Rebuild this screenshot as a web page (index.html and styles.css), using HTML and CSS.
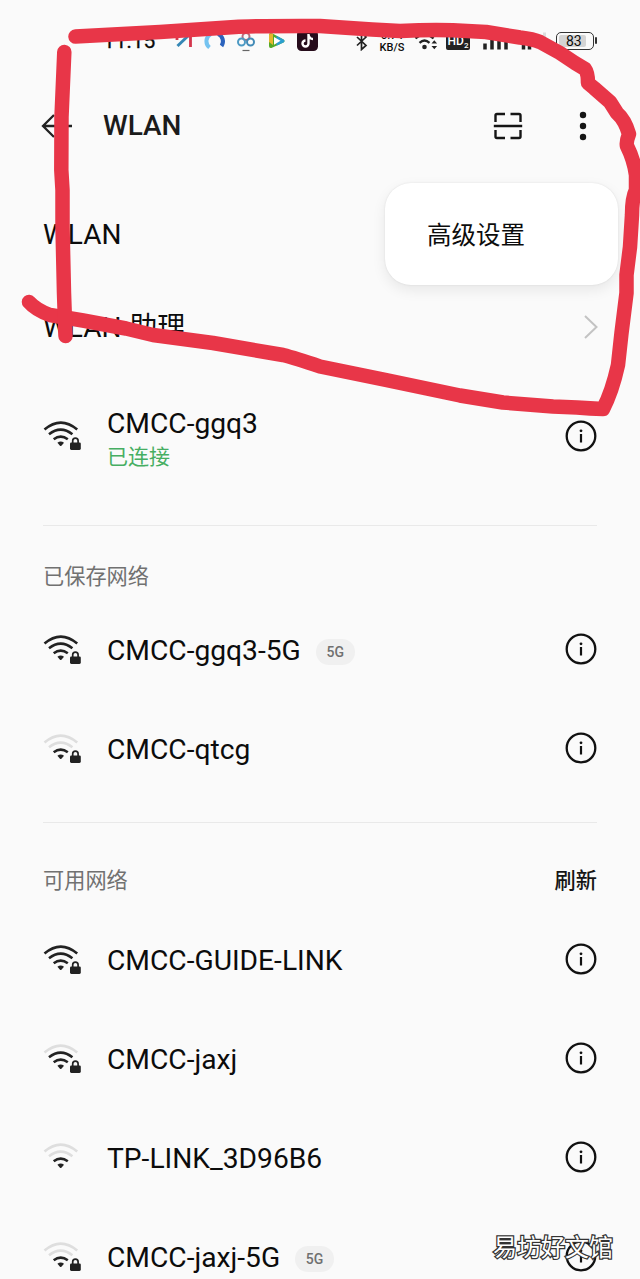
FILE: index.html
```html
<!DOCTYPE html>
<html lang="zh-CN">
<head>
<meta charset="utf-8">
<title>WLAN</title>
<link rel="stylesheet" href="styles.css">
</head>
<body>
<svg class="defs" width="0" height="0" aria-hidden="true">
  <defs>
    <symbol id="arc-outer" viewBox="0 0 40 32"><path d="M1.500 9.500Q17.800-4.300 34.200 9.500"/></symbol>
    <symbol id="arc-mid" viewBox="0 0 40 32"><path d="M6 14.300Q17.700 5 29.400 14.300"/></symbol>
    <symbol id="arc-inner" viewBox="0 0 40 32"><path d="M10.700 19.200Q17.700 14 24.800 19.200"/></symbol>
    <symbol id="wifi-dot" viewBox="0 0 40 32"><path d="M14.400 22.800Q17.700 20 21 22.800L18.400 25.700Q17.700 26.300 17 25.700Z" stroke="none" fill="#222"/></symbol>
    <symbol id="lock" viewBox="0 0 40 32"><rect x="27" y="22.500" width="10.800" height="7.400" rx="1.300" fill="#222" stroke="none"/><path d="M29.700 23V20.800a2.700 2.700 0 0 1 5.400 0V23" stroke-width="1.700"/></symbol>
    <symbol id="info" viewBox="0 0 32 32"><circle cx="16" cy="16" r="14.300" fill="none" stroke="#111" stroke-width="2.300"/><circle cx="16" cy="10.800" r="1.400" fill="#111"/><path d="M16 14v8.500" stroke="#111" stroke-width="2.200"/></symbol>
  </defs>
</svg>
<div class="screen">
  <div class="status">
    <span class="time">11:15</span>
    <div class="apps">
      <svg width="22" height="22" viewBox="0 0 22 22"><path d="M4 4v6M17.500 4v13" stroke="#d3364c" stroke-width="2.800"/><path d="M4.500 16L16 5" stroke="#3587b5" stroke-width="3"/></svg>
      <svg width="22" height="22" viewBox="0 0 22 22"><path d="M5.500 17.500A8 8 0 0 1 7 4" fill="none" stroke="#75c3f0" stroke-width="4"/><path d="M14 4a8 8 0 0 1 3.500 12" fill="none" stroke="#2b63bd" stroke-width="4"/></svg>
      <svg width="22" height="22" viewBox="0 0 22 22"><g fill="none" stroke-width="2"><circle cx="11" cy="6.500" r="3.500" stroke="#b76b7c"/><circle cx="6.500" cy="12" r="3.500" stroke="#4d9ac4"/><circle cx="15.500" cy="12" r="3.500" stroke="#438bb7"/><path d="M7.500 20.500h7" stroke="#666" stroke-width="1.200"/></g></svg>
      <svg width="22" height="22" viewBox="0 0 22 22"><path d="M3 5Q3 2 6.500 3.500L17.500 9.500Q19.500 11 17.500 12.500L6.500 17.500Q3 19 3 16Z" fill="#55a927"/><path d="M3 5v7l4 3V4Q3.500 2 3 5Z" fill="#e6b72d"/><path d="M10.500 5.700L17.500 9.500Q19.500 11 17.500 12.500L10.500 15.700Z" fill="#2b9fcf"/><path d="M8 7l6.500 3.800L8 14.800Z" fill="#fff"/></svg>
      <svg width="22" height="22" viewBox="0 0 22 22"><rect width="21" height="21" rx="4.500" fill="#260c1b"/><path d="M11.500 4v9.500a3 3 0 1 1-3-3M11.500 5q1 4 4.500 4" fill="none" stroke="#fff" stroke-width="2.400"/></svg>
    </div>
    <div class="signals">
      <svg class="bt" width="14" height="20" viewBox="0 0 14 20"><path d="M2 6l9 8.500-4.500 4V1.500L11 6l-9 8.500" fill="none" stroke="#222" stroke-width="1.700"/></svg>
      <span class="speed">0.74<br>KB/S</span>
      <svg class="swifi" width="25" height="20" viewBox="0 0 25 20"><path d="M1.500 7.500Q10.500-1 19.500 7.500M5.500 11.800q5-4.400 10 0" fill="none" stroke="#222" stroke-width="2.400"/><circle cx="10.500" cy="16" r="2.300" fill="#222"/><path d="M17.500 12.500l2.800-3.300 2.800 3.300zM17.500 15l2.800 3.300 2.800-3.300z" fill="#222"/></svg>
      <span class="hd">HD<sub>2</sub></span>
      <svg class="bars" width="26" height="20" viewBox="0 0 26 20"><path d="M2 12.500V18.500M9 9v9.500M16 6v12.500M23 2v16.500" stroke="#222" stroke-width="3.500"/></svg>
      <svg class="bars2" width="26" height="20" viewBox="0 0 26 20"><path d="M2.500 12.500V18.500M8.500 1v17.500" stroke="#222" stroke-width="3.500"/><path d="M23.500 1.500v5" stroke="#ddd" stroke-width="3"/></svg>
      <span class="battery"><span class="level">83</span></span>
    </div>
  </div>

  <header class="header">
    <svg class="back" width="32" height="26" viewBox="0 0 32 26"><path d="M31 13H2M13 2L2 13l11 11" fill="none" stroke="#222" stroke-width="2.300"/></svg>
    <h1 class="title">WLAN</h1>
    <svg class="scan" width="30" height="28" viewBox="0 0 30 28"><path d="M2.500 10V3.500a1.500 1.500 0 0 1 1.500-1.500H12M17.500 2H26a1.500 1.500 0 0 1 1.500 1.500V10M2.500 18v6.500A1.500 1.500 0 0 0 4 26h8M17.500 26H26a1.500 1.500 0 0 0 1.500-1.500V18M.8 14h28.400" fill="none" stroke="#151515" stroke-width="2.400"/></svg>
    <svg class="more" width="8" height="30" viewBox="0 0 8 30"><circle cx="4" cy="4" r="3.200"/><circle cx="4" cy="15" r="3.200"/><circle cx="4" cy="26" r="3.200"/></svg>
  </header>

  <div class="setting"><span>WLAN</span></div>
  <div class="setting assistant"><span>WLAN 助理</span><svg class="chevron" width="16" height="26" viewBox="0 0 16 26"><path d="M2 2l11.500 11L2 24" fill="none" stroke="#c3c3c3" stroke-width="2"/></svg></div>

  <div class="net connected">
    <svg class="wifi"><use href="#arc-outer"/><use href="#arc-mid"/><use href="#arc-inner"/><use href="#wifi-dot"/><use href="#lock"/></svg>
    <div class="label"><div class="name">CMCC-ggq3</div><div class="state">已连接</div></div>
    <svg class="info"><use href="#info"/></svg>
  </div>

  <section class="group saved">
    <div class="heading">已保存网络</div>
    <div class="net">
      <svg class="wifi"><use href="#arc-outer"/><use href="#arc-mid"/><use href="#arc-inner"/><use href="#wifi-dot"/><use href="#lock"/></svg>
      <span class="name">CMCC-ggq3-5G</span><span class="tag">5G</span>
      <svg class="info"><use href="#info"/></svg>
    </div>
    <div class="net">
      <svg class="wifi"><use class="off" href="#arc-outer"/><use class="off" href="#arc-mid"/><use href="#arc-inner"/><use href="#wifi-dot"/><use href="#lock"/></svg>
      <span class="name">CMCC-qtcg</span>
      <svg class="info"><use href="#info"/></svg>
    </div>
  </section>

  <section class="group available">
    <div class="heading">可用网络<span class="refresh">刷新</span></div>
    <div class="net">
      <svg class="wifi"><use href="#arc-outer"/><use href="#arc-mid"/><use href="#arc-inner"/><use href="#wifi-dot"/><use href="#lock"/></svg>
      <span class="name">CMCC-GUIDE-LINK</span>
      <svg class="info"><use href="#info"/></svg>
    </div>
    <div class="net">
      <svg class="wifi"><use class="off" href="#arc-outer"/><use href="#arc-mid"/><use href="#arc-inner"/><use href="#wifi-dot"/><use href="#lock"/></svg>
      <span class="name">CMCC-jaxj</span>
      <svg class="info"><use href="#info"/></svg>
    </div>
    <div class="net">
      <svg class="wifi"><use class="off" href="#arc-outer"/><use class="off" href="#arc-mid"/><use href="#arc-inner"/><use href="#wifi-dot"/></svg>
      <span class="name">TP-LINK_3D96B6</span>
      <svg class="info"><use href="#info"/></svg>
    </div>
    <div class="net">
      <svg class="wifi"><use class="off" href="#arc-outer"/><use class="off" href="#arc-mid"/><use href="#arc-inner"/><use href="#wifi-dot"/><use href="#lock"/></svg>
      <span class="name">CMCC-jaxj-5G</span><span class="tag">5G</span>
      <svg class="info"><use href="#info"/></svg>
    </div>
  </section>

  <div class="menu">高级设置</div>

  <svg class="marker" width="640" height="430" viewBox="0 0 640 430">
    <path d="M75.500 36.600L160 32L235 27Q250 25.800 320 26L372 29.500L400 31Q430 29.500 453 30.300L486 32L520 37.500Q533 39 540 42L560 53L575 63L585 69Q588 73 588 83L594 88L610 102L617 113Q625 120 629 134Q626 142 627 146Q634 160 636 175V190Q632 198 632 215L630 247L626.500 275V293L621.500 333L618 365Q612 392 603 409Q590 408.500 577 407.500L553 406.500L503 402.500L460 395.500L386 380L320 366.500Q295 358 283 355L213 343L153 335L126 328.500L83 320.500L50 315Q36 310 29 302"/>
    <path d="M64.300 52L61.500 117L61.300 170L62.500 190V227L64 293L65.500 336"/>
  </svg>
  <div class="watermark">易坊好文馆</div>
</div>
</body>
</html>
```
FILE: styles.css
```css
* { box-sizing: border-box; }

body {
  margin: 0;
  background: #fafafa;
  color: #0c0c0c;
  font-family: Roboto, "Noto Sans CJK SC", sans-serif;
}

svg { display: block; flex: none; }
.defs { position: absolute; }

.screen {
  position: relative;
  height: 1279px;
  overflow: hidden;
  background: #fafafa;
}

/* status bar */
.status {
  display: flex;
  align-items: center;
  height: 82px;
  padding-left: 103px;
}
.time { width: 70px; font-size: 21px; line-height: 22px; -webkit-text-stroke: .3px #0c0c0c; }
.apps { display: flex; gap: 9px; width: 182px; }
.signals { display: flex; align-items: center; }
.speed {
  width: 28px;
  margin-left: 9px;
  padding-top: 2px;
  font-size: 11px;
  font-weight: 500;
  line-height: 12px;
  text-align: center;
}
.swifi { margin-left: 8px; }
.hd {
  width: 24px;
  height: 18px;
  margin: 0 13px 0 7px;
  border-radius: 2px;
  background: #222;
  color: #fff;
  font-size: 12px;
  font-weight: 500;
  line-height: 18px;
  text-align: center;
  white-space: nowrap;
}
.hd sub { font-size: 8px; line-height: 0; }
.bars2 { margin: 0 9px 0 12px; }
.battery {
  position: relative;
  width: 38px;
  height: 18px;
  padding: 2px;
  border: 1.500px solid #333;
  border-radius: 5px;
}
.battery::after {
  content: "";
  position: absolute;
  top: 4px;
  right: -4px;
  width: 2px;
  height: 7px;
  border-radius: 1px;
  background: #333;
}
.level {
  display: block;
  width: 27px;
  height: 12px;
  padding-left: 7px;
  border-radius: 2px;
  background: #d4d4d4;
  font-size: 14px;
  line-height: 13px;
}

/* title bar */
.header {
  display: flex;
  align-items: center;
  height: 88px;
  padding: 0 53px 0 41px;
}
.title {
  flex: 1;
  margin: 0 0 1px 30px;
  color: #1b1b1b;
  font-size: 28px;
  font-weight: 500;
}
.more { margin-left: 56px; fill: #151515; }

.setting {
  display: flex;
  align-items: center;
  justify-content: space-between;
  height: 92px;
  padding: 0 41px 0 43px;
  font-size: 28px;
}
.setting span { padding-bottom: 1px; }
.assistant span { padding-bottom: 4px; word-spacing: 1px; }
.header + .setting { margin-top: 19px; }

/* network rows */
.net {
  display: flex;
  align-items: center;
  height: 99px;
  padding: 0 43px;
}
.group .net { padding: 0; }
.connected { height: 126px; }
.wifi {
  width: 40px;
  height: 32px;
  margin-right: 24px;
  fill: none;
  stroke: #222;
  stroke-width: 2.600;
}
.wifi .off { stroke: #dedede; }
.name { font-size: 28.200px; line-height: 34px; padding-top: 3px; }
.label { padding-top: 8px; }
.label .name { padding: 0; }
.state {
  color: #46ae62;
  font-size: 21px;
  line-height: 32px;
}
.tag {
  width: 39px;
  height: 26px;
  margin: 5px 0 0 15px;
  border-radius: 13px;
  background: #f0f0f0;
  color: #707070;
  font-size: 14px;
  font-weight: 500;
  line-height: 26px;
  text-align: center;
}
.info { width: 32px; height: 32px; margin-left: auto; }
.group .info { margin-bottom: 2px; }

.group { margin: 0 43px; border-top: 1px solid #e9e9e9; }
.saved { margin-top: 26px; }
.available { margin-top: 24px; }
.heading {
  display: flex;
  justify-content: space-between;
  height: 74px;
  padding-top: 36px;
  color: #717171;
  font-size: 21.200px;
  line-height: 30px;
}
.available .heading { height: 87px; padding-top: 43px; }
.refresh { color: #151515; font-weight: 500; }

/* overlays */
.menu {
  position: absolute;
  top: 183px;
  left: 385px;
  width: 233px;
  height: 102px;
  padding-left: 42px;
  border-radius: 26px;
  background: #fff;
  box-shadow: 0 5px 14px rgba(0, 0, 0, .08), 0 0 2px rgba(0, 0, 0, .1);
  font-size: 24.500px;
  line-height: 106px;
}
.marker {
  position: absolute;
  top: 0;
  left: 0;
  fill: none;
  stroke: #e83648;
  stroke-width: 14.500;
  stroke-linecap: round;
  stroke-linejoin: round;
}
.watermark {
  position: absolute;
  top: 1231px;
  left: 493px;
  color: #fff;
  font-size: 24px;
  line-height: 34px;
  white-space: nowrap;
  -webkit-text-stroke: 2.500px #333;
  paint-order: stroke fill;
}
```
